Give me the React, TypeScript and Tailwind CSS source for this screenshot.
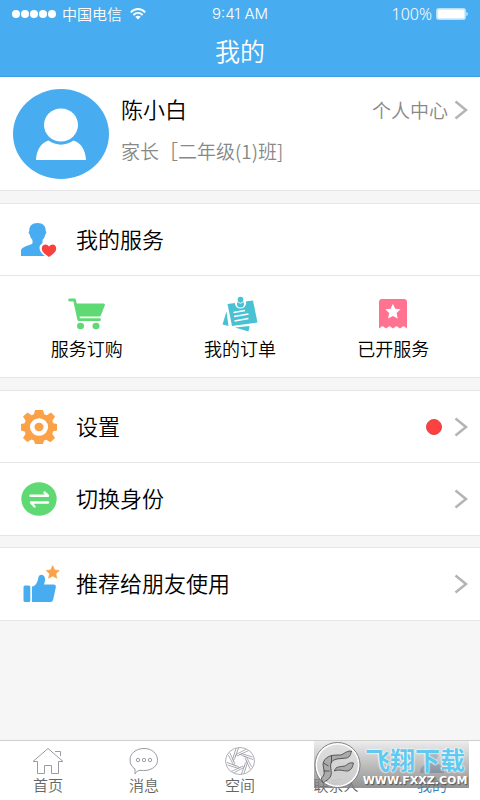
import type { ReactNode } from "react";

const STAR = "M12 1l3.3 7.2 7.7.9-5.700 5.300 1.500 7.800L12 18.400l-6.800 3.800 1.500-7.800L1 9.100l7.700-.9z";

function Chevron() {
  return (
    <svg className="h-5 w-3.5 shrink-0" viewBox="0 0 14 20" fill="none" stroke="#b4b4b4" strokeWidth="2.500" aria-hidden="true">
      <path d="M1.500 1.500 12 10 1.500 18.500" />
    </svg>
  );
}

function WifiIcon() {
  return (
    <svg className="h-3 w-4" viewBox="0 0 16 12" fill="none" stroke="#fff" strokeWidth="1.900" aria-hidden="true">
      <path d="M.8 4.400C5-.1 11-.1 15.200 4.400M3.400 7c2.800-2.900 6.400-2.900 9.200 0" />
      <path d="M5.300 8.800c1.700-1.500 3.700-1.500 5.400 0L8 11.600z" fill="#fff" stroke="none" />
    </svg>
  );
}

function BatteryIcon() {
  return (
    <svg className="h-3 w-8" viewBox="0 0 32 12" aria-hidden="true">
      <rect x=".5" y=".5" width="29" height="11" rx="2" fill="#d4edfe" stroke="#b5e0fd" />
      <rect x="2" y="2" width="26" height="8" rx="1" fill="#fff" />
      <path d="M30.500 4c1.500.5 1.500 3.500 0 4z" fill="#fff" />
    </svg>
  );
}

function Avatar() {
  return (
    <svg className="h-[90px] w-24 shrink-0" viewBox="0 0 96 90" role="img" aria-label="头像">
      <ellipse cx="48" cy="45" rx="48" ry="45" fill="#48adf0" />
      <ellipse cx="48" cy="36" rx="17" ry="16.500" fill="#fff" />
      <path d="M35.500 51.500C27 54.500 23.500 62 23 71h50c-.5-9-4-16.500-12.500-19.500-7.500 5.500-17.500 5.500-25 0z" fill="#fff" />
    </svg>
  );
}

function PersonHeartIcon() {
  return (
    <svg className="h-[36px] w-9" viewBox="0 0 36 36" aria-hidden="true">
      <path d="M0 34v-6c1-3 7-4.500 11-6 1-1 .5-3 .2-4.500C9.500 16 9 14 8.800 12.500 7.500 12 7.300 9.500 8.300 9 8 4 11 1 16.500 1S25 4 24.700 9c1 .5.800 3-.5 3.500-.2 1.500-.7 3.500-2.400 5-.3 1.500-.8 3.500.2 4.500L27 25v9z" fill="#48adf0" />
      <path d="M28 37c-5-3.500-9.500-6.500-9.500-11 0-5 6.500-7 9.500-3.500 3-3.500 9.500-1.500 9.500 3.500 0 4.500-4.500 7.500-9.500 11z" fill="#fff" />
      <path d="M28 35c-3.500-2.500-7.200-5-7.200-8.500 0-4.500 5-5.500 7.200-2 2.200-3.500 7.200-2.500 7.200 2C35.200 30 31.500 32.500 28 35z" fill="#fb4040" />
    </svg>
  );
}

function CartIcon() {
  return (
    <svg className="h-8 w-[37px]" viewBox="0 0 37 32" aria-hidden="true">
      <path d="M1.600 2H6.500l4.300 19.700H31.500" fill="none" stroke="#5fd973" strokeWidth="2.800" strokeLinecap="round" strokeLinejoin="round" />
      <path d="M7.500 5.500h28c1 0 1.500.8 1.300 1.800L33 17c-.4 1-1 1.500-2 1.500H10z" fill="#5fd973" />
      <ellipse cx="12.500" cy="28" rx="3.500" ry="3.200" fill="#5fd973" />
      <ellipse cx="28" cy="28" rx="3.500" ry="3.200" fill="#5fd973" />
    </svg>
  );
}

function NotesIcon() {
  return (
    <svg className="h-9 w-9" viewBox="0 0 36 36" aria-hidden="true">
      <path d="M4.500 15.500 6.500 30 .5 28.500zM13 31.500l14.500-1.500L26.500 35.500z" fill="#48c2d3" />
      <path d="M5.500 8 31 4.500 35.500 26.500 10 30z" fill="#48c2d3" />
      <path d="M11.500 16.500 23 14.500M12 20.500l14.500-2.500M12.500 25l14-2.500" stroke="#fff" strokeWidth="1.400" />
      <circle cx="18.500" cy="7" r="5.600" fill="#fff" />
      <circle cx="18.500" cy="8" r="3.500" fill="#48c2d3" />
      <circle cx="18.500" cy="3.600" r="2.800" fill="#48c2d3" />
      <path d="M15.500 6q3 2.500 6 0" fill="none" stroke="#fff" strokeWidth=".8" />
    </svg>
  );
}

function TicketIcon() {
  return (
    <svg className="h-[30px] w-7" viewBox="0 0 28 30" aria-hidden="true">
      <path d="M3 0h22q3 0 3 3v26.500L24.500 27 21 29.500 17.500 27 14 29.500 10.500 27 7 29.500 3.500 27 0 29.500V3q0-3 3-3z" fill="#ff7390" />
      <path d={STAR} transform="translate(5.500 4) scale(.7)" fill="#fff" />
    </svg>
  );
}

function GearIcon() {
  return (
    <svg className="h-[34px] w-9" viewBox="0 0 36 34" aria-hidden="true">
      <path d="M14 0h8l1.200 4.300 2.500 1L30 2.500l4 4-2.800 4.500 1.100 2.300L36 14v6.500l-3.700.8-1.100 2.500L34 28l-4.500 4.200-4.300-2.500-2.200.9-1 3.400h-8l-1.100-3.500-2.300-.9-4.400 2.400L2 28l2.600-4.300-1-2.300L0 20.500V14l3.700-.8 1-2.400L2 6.500l4.500-4 4 2.700 2.400-1z" fill="#fba148" />
      <ellipse cx="18" cy="17" rx="6.800" ry="6.500" fill="none" stroke="#fff" strokeWidth="4.500" />
    </svg>
  );
}

function SwitchIcon() {
  return (
    <svg className="h-[34px] w-9" viewBox="0 0 36 34" aria-hidden="true">
      <ellipse cx="18" cy="17" rx="17.700" ry="16.800" fill="#5fd973" />
      <path d="M9.500 13.700H27l-3.500-3.200M27 20.500H10l3.500 4" fill="none" stroke="#fff" strokeWidth="2.400" strokeLinecap="round" strokeLinejoin="round" />
    </svg>
  );
}

function ThumbIcon() {
  return (
    <svg className="h-[38px] w-[42px]" viewBox="-1 0 42 38" aria-hidden="true">
      <rect x="1.500" y="20.500" width="6.800" height="16.500" rx="1.500" fill="#48adf0" />
      <path d="M10 21.500c4-.5 5.500-4.500 6.300-8.500.5-4.500 6.200-4 6.700.5.200 2-.3 4-1 6h9.500c1.700 0 2.700 1.200 2.300 3l-2.600 12c-.4 1.700-1.400 2.500-3 2.500H10z" fill="#48adf0" />
      <path d={STAR} transform="translate(23.500 0) scale(.6)" fill="#fba148" stroke="#fba148" strokeLinejoin="round" />
    </svg>
  );
}

function HomeIcon() {
  return (
    <svg className="h-7 w-8" viewBox="0 0 32 28" fill="none" stroke="#9a9ba3" aria-hidden="true">
      <path d="M1 14.500 16 1.500l15 13h-4.500v12h-7v-8h-7v8h-7v-12H1zM23 4.500h5.500V9" />
    </svg>
  );
}

function ChatIcon() {
  return (
    <svg className="h-7 w-8" viewBox="0 0 32 28" fill="none" stroke="#9a9ba3" aria-hidden="true">
      <path d="M7 22v5c1-2 2.500-3.300 5-3.700 10 1.500 17.500-3.300 17.500-10C29.500 6.500 24 1.500 16 1.500S2 6.500 2 13c0 4 2 7 5 9z" />
      <circle cx="10" cy="13" r="1.700" />
      <circle cx="16" cy="13" r="1.700" />
      <circle cx="22" cy="13" r="1.700" />
    </svg>
  );
}

function ApertureIcon() {
  const blades = [0, 45, 90, 135, 180, 225, 270, 315];
  return (
    <svg className="h-7 w-8" viewBox="0 0 32 28" fill="none" stroke="#9a9ba3" strokeWidth=".8" aria-hidden="true">
      <ellipse cx="16" cy="14" rx="14.500" ry="13.500" />
      {blades.map((angle) => (
        <path key={angle} d="M12.500 7.300 22 2.300M13 9 24.300 3.700M12.500 7.300 11 10" transform={`rotate(${angle} 16 14)`} />
      ))}
    </svg>
  );
}

function ContactsIcon() {
  return (
    <svg className="h-7 w-8" viewBox="0 0 32 28" fill="none" stroke="#9a9ba3" aria-hidden="true">
      <circle cx="16" cy="8" r="6" />
      <path d="M4 26c0-14 24-14 24 0z" />
    </svg>
  );
}

function MeIcon() {
  return (
    <svg className="h-7 w-8" viewBox="0 0 32 28" fill="#3c7fb5" aria-hidden="true">
      <circle cx="16" cy="8" r="6" />
      <path d="M4 26c0-14 24-14 24 0z" />
    </svg>
  );
}

function WatermarkLogo() {
  return (
    <svg className="h-[46px] w-[47px] shrink-0" viewBox="0 0 46 46" aria-hidden="true">
      <circle cx="23" cy="23" r="21.500" fill="#dedede" fillOpacity=".75" stroke="#fff" strokeWidth="2" />
      <circle cx="23" cy="23" r="22.500" fill="none" stroke="#666" strokeWidth=".8" />
      <g fill="#ababab" stroke="#4a4a4a" strokeWidth=".9" strokeLinejoin="round">
        <path d="M7 36c6-5 0-11 2-16 3-7 10-7 17-7 4-1 5-4 11-4-1 3-1 6-5 7-6 1-12 0-15 4-3 5 3 12-3 17-2 2-4 2-5 4-1-1-2-3-2-5z" />
        <path d="M20 29c1-5 6-4 10-5 3-1 4-4 9-3-1 4-2 7-6 8-4 0-9-2-13 0z" />
        <path d="M17 13v8M9 21l5 3M9 29h6" fill="none" />
      </g>
    </svg>
  );
}

function Row({ icon, label, alert }: { icon: ReactNode; label: string; alert?: boolean }) {
  return (
    <button type="button" className="flex h-[72px] w-full items-center bg-white pr-3 pl-[21px] text-left">
      <span className="flex w-[55px] shrink-0 items-center">{icon}</span>
      <span className="flex-1 pb-1 text-[22px] leading-8">{label}</span>
      {alert && <span className="mr-3 size-4 rounded-full border border-[#e04444] bg-[#fc4141]" />}
      <Chevron />
    </button>
  );
}

function Service({ icon, label }: { icon: ReactNode; label: string }) {
  return (
    <button type="button" className="flex flex-col items-center">
      <span className="flex h-9 items-center">{icon}</span>
      <span className="mt-0.5 text-[18px] leading-7">{label}</span>
    </button>
  );
}

const tabs = [
  { label: "首页", icon: <HomeIcon /> },
  { label: "消息", icon: <ChatIcon /> },
  { label: "空间", icon: <ApertureIcon /> },
  { label: "联系人", icon: <ContactsIcon /> },
  { label: "我的", icon: <MeIcon />, active: true },
];

export default function App() {
  return (
    <div className="relative flex min-h-screen flex-col bg-[#f6f6f6] font-['Noto_Sans_CJK_SC',sans-serif] font-[350] text-black">
      <header className="h-[77px] border-b border-[#3da0e4] bg-[#48adf0] text-white">
        <div className="grid h-7 grid-cols-3 items-center px-3 text-[15px] leading-5">
          <div className="flex items-center">
            <span className="flex gap-px">
              {[0, 1, 2, 3, 4].map((dot) => (
                <span key={dot} className="size-2 rounded-full bg-white" />
              ))}
            </span>
            <span className="mr-2 ml-1.5">中国电信</span>
            <WifiIcon />
          </div>
          <span className="text-center font-['Inter',sans-serif]">9:41 AM</span>
          <div className="flex items-center justify-end gap-1 font-['Noto_Sans',sans-serif] text-[16px]">
            <span>100%</span>
            <BatteryIcon />
          </div>
        </div>
        <h1 className="text-center text-[25px] leading-[44px]">我的</h1>
      </header>

      <main className="flex-1">
        <section className="flex border-b border-[#e6e6e6] bg-white pt-3 pr-3 pb-[11px] pl-[13px]">
          <Avatar />
          <div className="ml-3 flex-1 pt-0.5">
            <div className="flex items-center justify-between">
              <h2 className="pb-1 text-[22px] leading-[34px]">陈小白</h2>
              <button type="button" className="flex items-center gap-1.5 text-[19px] leading-[34px] text-[#888]">
                个人中心
                <Chevron />
              </button>
            </div>
            <p className="mt-2 text-[19px] leading-7 text-[#888]">家长［二年级(1)班]</p>
          </div>
        </section>

        <section className="mt-3 border-y border-[#e6e6e6] bg-white">
          <div className="flex h-[72px] items-center border-b border-[#e6e6e6] pl-[21px]">
            <span className="w-[55px]"><PersonHeartIcon /></span>
            <h2 className="pb-1 text-[22px] leading-8">我的服务</h2>
          </div>
          <div className="grid h-[101px] grid-cols-3 items-start px-2.5 pt-5">
            <Service icon={<CartIcon />} label="服务订购" />
            <Service icon={<NotesIcon />} label="我的订单" />
            <Service icon={<TicketIcon />} label="已开服务" />
          </div>
        </section>

        <section className="mt-3 divide-y divide-[#e6e6e6] border-y border-[#e6e6e6] bg-white">
          <Row icon={<GearIcon />} label="设置" alert />
          <Row icon={<SwitchIcon />} label="切换身份" />
        </section>

        <section className="mt-[11px] border-y border-[#e6e6e6] bg-white">
          <Row icon={<ThumbIcon />} label="推荐给朋友使用" />
        </section>
      </main>

      <nav className="grid h-[60px] grid-cols-5 border-t border-[#cfcfcf] bg-white" aria-label="主导航">
        {tabs.map((tab) => (
          <button
            key={tab.label}
            type="button"
            className={`flex flex-col items-center pt-1.5 text-[15px] leading-5 ${tab.active ? "text-[#3c7fb5]" : "text-[#666]"}`}
          >
            {tab.icon}
            <span>{tab.label}</span>
          </button>
        ))}
      </nav>

      <div className="pointer-events-none absolute right-[11px] bottom-3 flex h-[47px] w-[155px] items-center bg-linear-to-b from-[#e8e8e8]/80 to-[#777]/80 text-white">
        <WatermarkLogo />
        <div className="flex flex-1 flex-col items-center pt-1">
          <span className="text-[25px] leading-7 font-bold text-[#5fc9f0] [text-shadow:0_0_1px_#fff,0_0_2px_#fff,0_0_2px_#fff]">飞翔下载</span>
          <span className="font-['DejaVu_Sans',sans-serif] text-[11px] leading-4 font-bold [text-shadow:1px_1px_1px_#555]">WWW.FXXZ.COM</span>
        </div>
      </div>
    </div>
  );
}
